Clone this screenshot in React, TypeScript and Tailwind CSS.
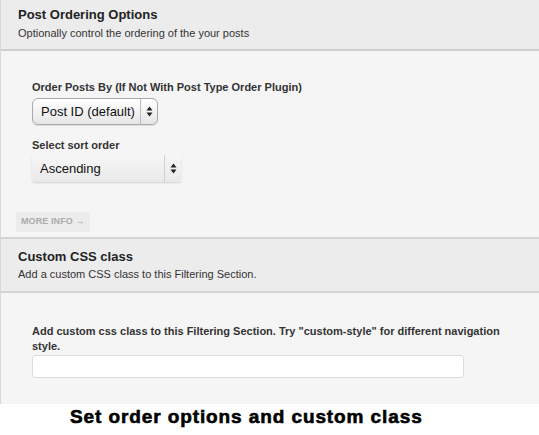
import React from "react";

function Arrows() {
  return (
    <svg width="7" height="11" viewBox="0 0 7 11" className="block">
      <path d="M3.5 0.5 L6.5 4.5 L0.5 4.5 Z" fill="#222" />
      <path d="M3.5 10.5 L6.5 6.5 L0.5 6.5 Z" fill="#222" />
    </svg>
  );
}

export default function App() {
  return (
    <div className="w-[539px] h-[435px] bg-white overflow-hidden" style={{ fontFamily: '"Liberation Sans", Arial, sans-serif' }}>
      <div className="border-l border-[#d8d8d8] bg-[#f5f5f5]">
        {/* Header 1 */}
        <div className="bg-[#ececec] border-b-2 border-[#cfcfcf] h-[51px] pl-[17px] pt-[7px]">
          <div className="text-[13px] font-bold text-[#222] leading-[16px]">Post Ordering Options</div>
          <div className="text-[11px] text-[#333] leading-[14px] mt-[3px]">Optionally control the ordering of the your posts</div>
        </div>
        {/* Content 1 */}
        <div className="h-[186px] pt-[29px] pl-[15px] flex flex-col">
          <div className="pl-[16px] text-[11px] font-bold text-[#333] leading-[14px]">Order Posts By (If Not With Post Type Order Plugin)</div>
          <div className="pl-[16px] mt-[4px]">
            <div className="w-[126px] h-[27px] rounded-[6px] border border-[#aaa] bg-gradient-to-b from-white to-[#e6e6e6] flex items-center shadow-[0_1px_1px_rgba(0,0,0,0.1)]">
              <span className="pl-[8px] text-[13px] text-[#111] flex-1">Post ID (default)</span>
              <span className="w-[17px] h-full border-l border-[#bbb] flex items-center justify-center"><Arrows /></span>
            </div>
          </div>
          <div className="pl-[16px] mt-[13px] text-[11px] font-bold text-[#333] leading-[14px]">Select sort order</div>
          <div className="pl-[16px] mt-[3px]">
            <div className="w-[149px] h-[27px] rounded-[3px] bg-gradient-to-b from-[#f7f7f7] to-[#e9e9e9] flex items-center shadow-[0_1px_2px_rgba(0,0,0,0.15)]">
              <span className="pl-[8px] text-[13px] text-[#111] flex-1">Ascending</span>
              <span className="w-[17px] h-full border-l border-[#d0d0d0] flex items-center justify-center"><Arrows /></span>
            </div>
          </div>
          <div className="mt-[25px]">
            <span className="inline-flex items-center h-[20px] px-[5px] bg-[#ececec] text-[9px] font-bold text-[#aaa] tracking-[0.1px]">MORE INFO →</span>
          </div>
        </div>
        {/* Header 2 */}
        <div className="bg-[#ececec] border-t-2 border-b-2 border-[#d4d4d4] h-[56px] pl-[17px] pt-[10px]">
          <div className="text-[13px] font-bold text-[#222] leading-[16px]">Custom CSS class</div>
          <div className="text-[11px] text-[#333] leading-[14px] mt-[2px]">Add a custom CSS class to this Filtering Section.</div>
        </div>
        {/* Content 2 */}
        <div className="h-[111px] pt-[31px] pl-[31px] pr-[20px]">
          <div className="text-[11px] font-bold text-[#333] leading-[15px]">Add custom css class to this Filtering Section. Try "custom-style" for different navigation style.</div>
          <div className="mt-[1px] w-[432px] h-[23px] bg-white border border-[#dcdcdc] rounded-[3px]" />
        </div>
      </div>
      <div className="pl-[70px] pt-[2px] text-[19px] font-black text-black leading-[22px] tracking-[0.9px] [-webkit-text-stroke:0.6px_black]">Set order options and custom class</div>
    </div>
  );
}
